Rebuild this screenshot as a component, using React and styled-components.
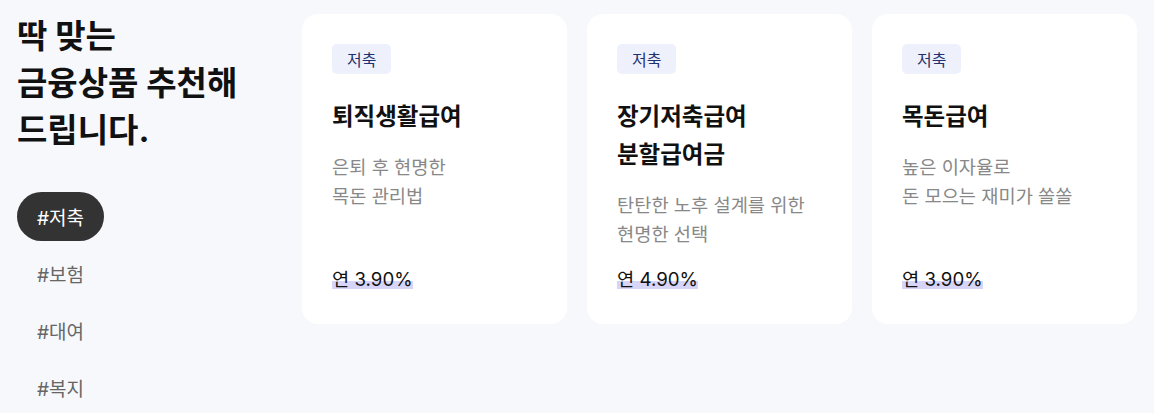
import React from "react";
import styled, { createGlobalStyle } from "styled-components";

const Global = createGlobalStyle`
  html, body {
    margin: 0;
    padding: 0;
    background: #f7f8fc;
    font-family: Inter, "Noto Sans CJK KR", sans-serif;
  }
  * { box-sizing: border-box; }
`;

const Page = styled.div`
  display: flex;
  align-items: flex-start;
  padding: 14px 0 0 17px;
  min-height: 413px;
`;

const Side = styled.aside`
  width: 285px;
  flex-shrink: 0;
  display: flex;
  flex-direction: column;
`;

const Heading = styled.h2`
  margin: -1px 0 0;
  font-size: 33px;
  line-height: 47px;
  font-weight: 700;
  color: #111;
`;

const TagList = styled.ul`
  list-style: none;
  margin: 38px 0 0;
  padding: 0;
  display: flex;
  flex-direction: column;
  align-items: flex-start;
  gap: 8px;
`;

const TagItem = styled.li`
  height: 49px;
  display: flex;
  align-items: center;
  padding: 0 20px;
  border-radius: 25px;
  font-size: 19px;
  color: ${(p) => (p.$active ? "#ffffff" : "#666666")};
  background: ${(p) => (p.$active ? "#333333" : "transparent")};
`;

const Cards = styled.div`
  display: flex;
  gap: 20px;
`;

const Card = styled.article`
  width: 265px;
  height: 310px;
  background: #ffffff;
  border-radius: 16px;
  padding: 30px;
  display: flex;
  flex-direction: column;
  align-items: flex-start;
`;

const Badge = styled.span`
  display: inline-flex;
  align-items: center;
  height: 30px;
  padding: 0 15px;
  border-radius: 5px;
  background: #eef1fc;
  color: #1f3170;
  font-size: 16px;
`;

const Title = styled.h3`
  margin: 24px 0 0;
  font-size: 23.5px;
  line-height: 38px;
  font-weight: 700;
  color: #111;
`;

const Desc = styled.p`
  margin: 17px 0 0;
  font-size: 18.7px;
  line-height: 29px;
  color: #888888;
`;

const Rate = styled.p`
  margin: auto 0 0;
  font-size: 18.7px;
  line-height: 29px;
  color: #111;
`;

const Mark = styled.span`
  background: linear-gradient(to bottom, transparent 58%, #d6d5f8 58%, #d6d5f8 90%, transparent 90%);
`;

const tags = ["#저축", "#보험", "#대여", "#복지"];

const products = [
  { title: ["퇴직생활급여"], desc: ["은퇴 후 현명한", "목돈 관리법"], rate: "연 3.90%" },
  { title: ["장기저축급여", "분할급여금"], desc: ["탄탄한 노후 설계를 위한", "현명한 선택"], rate: "연 4.90%" },
  { title: ["목돈급여"], desc: ["높은 이자율로", "돈 모으는 재미가 쏠쏠"], rate: "연 3.90%" },
];

const Lines = ({ lines }) =>
  lines.map((l, i) => (
    <React.Fragment key={i}>
      {i > 0 && <br />}
      {l}
    </React.Fragment>
  ));

export default function App() {
  return (
    <>
      <Global />
      <Page>
        <Side>
          <Heading>
            딱 맞는
            <br />
            금융상품 추천해
            <br />
            드립니다.
          </Heading>
          <TagList>
            {tags.map((t, i) => (
              <TagItem key={t} $active={i === 0}>
                {t}
              </TagItem>
            ))}
          </TagList>
        </Side>
        <Cards>
          {products.map((p, i) => (
            <Card key={i}>
              <Badge>저축</Badge>
              <Title>
                <Lines lines={p.title} />
              </Title>
              <Desc>
                <Lines lines={p.desc} />
              </Desc>
              <Rate>
                <Mark>{p.rate}</Mark>
              </Rate>
            </Card>
          ))}
        </Cards>
      </Page>
    </>
  );
}
